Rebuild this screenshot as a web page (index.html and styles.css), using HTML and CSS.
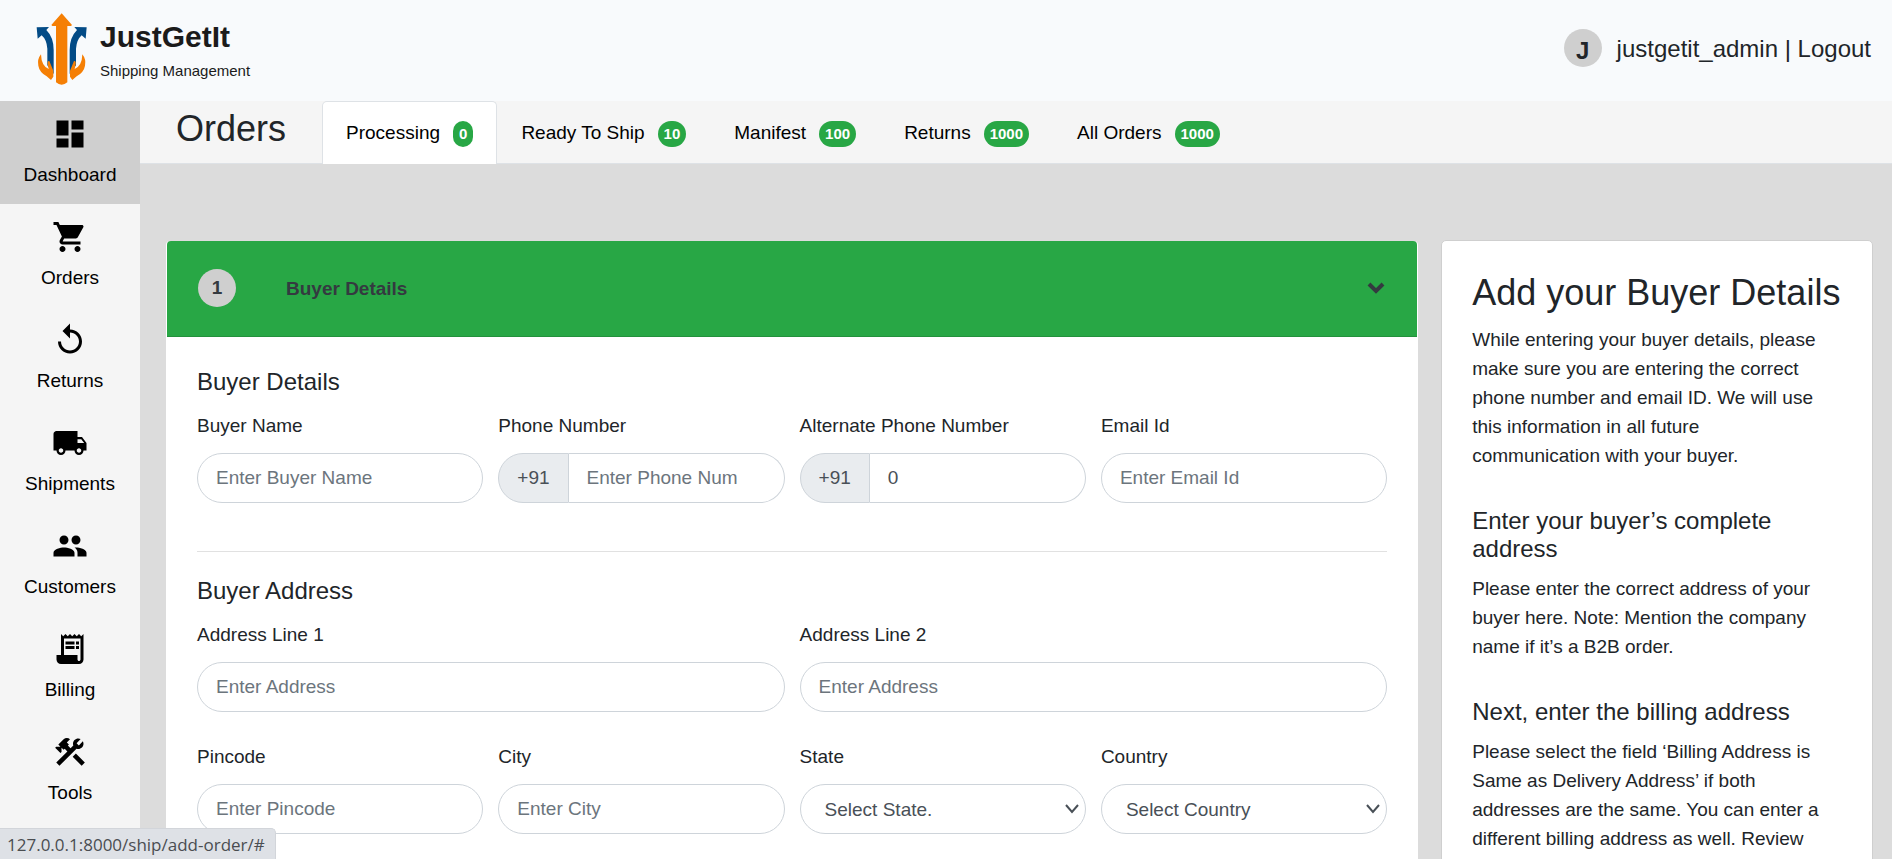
FILE: index.html
```html
<!DOCTYPE html>
<html lang="en">
<head>
<meta charset="utf-8">
<meta name="viewport" content="width=device-width, initial-scale=1">
<title>JustGetIt - Add Order</title>
<link rel="stylesheet" href="styles.css">
</head>
<body>
<header class="topbar">
  <a class="brand" href="#">
    <svg class="brand-logo" viewBox="108 39 156 216" aria-hidden="true">
      <g id="logo-side">
        <path fill="#034b86" d="M110 82 L147 81 L139 90 Q161 112 161 150 V222 L142 196 V146 Q140 119 125 106 L113 116 Z"/>
        <path fill="#f57f05" d="M123 163 Q111 178 115 197 Q118 216 140 229 L153 240 L160 230 V212 L148 183 Q142 181 143 192 L146 207 Q124 198 123 163 Z"/>
      </g>
      <use href="#logo-side" transform="translate(370 0) scale(-1 1)"/>
      <path fill="#f57f05" d="M185 40 L216 75 L213 78 H202 V247 Q194 254 185 254 Q176 254 168 247 V78 H157 L154 75 Z"/>
    </svg>
    <span class="brand-text">
      <strong class="brand-name">JustGetIt</strong>
      <span class="brand-sub">Shipping Management</span>
    </span>
  </a>
  <div class="user">
    <span class="avatar">J</span>
    <span>justgetit_admin | <a href="#">Logout</a></span>
  </div>
</header>

<div class="shell">
  <nav class="sidebar" aria-label="Main">
    <a class="side-item active" href="#">
      <svg viewBox="0 0 24 24" aria-hidden="true"><path d="M3 13h8V3H3v10zm0 8h8v-6H3v6zm10 0h8V11h-8v10zm0-18v6h8V3h-8z"/></svg>
      Dashboard
    </a>
    <a class="side-item" href="#">
      <svg viewBox="0 0 24 24" aria-hidden="true"><path d="M7 18c-1.1 0-1.99.9-1.99 2S5.9 22 7 22s2-.9 2-2-.9-2-2-2zM1 2v2h2l3.6 7.59-1.35 2.45c-.16.28-.25.61-.25.96 0 1.1.9 2 2 2h12v-2H7.42c-.14 0-.25-.11-.25-.25l.03-.12.9-1.63h7.45c.75 0 1.41-.41 1.75-1.03l3.58-6.49c.08-.14.12-.31.12-.48 0-.55-.45-1-1-1H5.21l-.94-2H1zm16 16c-1.1 0-1.99.9-1.99 2s.89 2 1.99 2 2-.9 2-2-.9-2-2-2z"/></svg>
      Orders
    </a>
    <a class="side-item" href="#">
      <svg viewBox="0 0 24 24" aria-hidden="true"><path d="M12 5V1L7 6l5 5V7c3.31 0 6 2.69 6 6s-2.69 6-6 6-6-2.69-6-6H4c0 4.42 3.58 8 8 8s8-3.58 8-8-3.58-8-8-8z"/></svg>
      Returns
    </a>
    <a class="side-item" href="#">
      <svg viewBox="0 0 24 24" aria-hidden="true"><path d="M20 8h-3V4H3c-1.1 0-2 .9-2 2v11h2c0 1.66 1.34 3 3 3s3-1.34 3-3h6c0 1.66 1.34 3 3 3s3-1.34 3-3h2v-5l-3-4zM6 18.500c-.83 0-1.500-.67-1.500-1.500s.67-1.500 1.500-1.500 1.500.67 1.500 1.500-.67 1.500-1.500 1.500zm13.500-9l1.960 2.500H17V9.500h2.500zm-1.500 9c-.83 0-1.500-.67-1.500-1.500s.67-1.500 1.500-1.500 1.500.67 1.500 1.500-.67 1.500-1.500 1.500z"/></svg>
      Shipments
    </a>
    <a class="side-item" href="#">
      <svg viewBox="0 0 24 24" aria-hidden="true"><path d="M16 11c1.660 0 2.990-1.340 2.990-3S17.660 5 16 5c-1.660 0-3 1.340-3 3s1.340 3 3 3zm-8 0c1.660 0 2.990-1.340 2.990-3S9.660 5 8 5C6.340 5 5 6.340 5 8s1.340 3 3 3zm0 2c-2.330 0-7 1.170-7 3.500V19h14v-2.500c0-2.330-4.670-3.500-7-3.500zm8 0c-.29 0-.62.02-.97.05 1.160.84 1.970 1.970 1.970 3.450V19h6v-2.500c0-2.330-4.670-3.500-7-3.500z"/></svg>
      Customers
    </a>
    <a class="side-item" href="#">
      <svg viewBox="0 0 24 24" aria-hidden="true"><path d="M19.500 3.500L18 2l-1.500 1.500L15 2l-1.500 1.500L12 2l-1.500 1.500L9 2 7.500 3.500 6 2v14H3v3c0 1.660 1.340 3 3 3h12c1.660 0 3-1.340 3-3V2l-1.500 1.500zM19 19c0 .55-.45 1-1 1s-1-.45-1-1v-3H8V5h11v14z"/><path d="M9 7h6v2H9zM16 7h2v2h-2zM9 10h6v2H9zM16 10h2v2h-2z"/></svg>
      Billing
    </a>
    <a class="side-item" href="#">
      <svg viewBox="0 0 24 24" aria-hidden="true"><path d="M13.783 15.172l2.121-2.121 5.996 5.996-2.121 2.121zM17.500 10c1.930 0 3.500-1.570 3.500-3.500 0-.58-.16-1.120-.41-1.600l-2.700 2.700-1.490-1.490 2.700-2.700c-.48-.25-1.020-.41-1.600-.41C15.570 3 14 4.570 14 6.500c0 .41.08.8.21 1.160l-1.850 1.850-1.780-1.780.71-.71-1.410-1.410L12 3.490c-1.170-1.170-3.070-1.170-4.240 0L4.220 7.030l1.410 1.410H2.810l-.71.71 3.540 3.540.71-.71V9.150l1.410 1.410.71-.71 1.780 1.780-7.410 7.410 2.120 2.120L16.340 9.790c.36.13.75.21 1.160.21z"/></svg>
      Tools
    </a>
  </nav>

  <div class="content">
    <div class="tabbar">
      <h1 class="page-title">Orders</h1>
      <nav class="tabs" aria-label="Order status">
        <a class="tab active" href="#">Processing <span class="badge">0</span></a>
        <a class="tab" href="#">Ready To Ship <span class="badge">10</span></a>
        <a class="tab" href="#">Manifest <span class="badge">100</span></a>
        <a class="tab" href="#">Returns <span class="badge">1000</span></a>
        <a class="tab" href="#">All Orders <span class="badge">1000</span></a>
      </nav>
    </div>

    <main class="main">
      <form class="card">
        <button class="card-header" type="button">
          <span class="step">1</span>
          <span class="card-title">Buyer Details</span>
          <svg class="chevron" viewBox="0 0 18 12" aria-hidden="true"><path d="M2 2l7 7 7-7"/></svg>
        </button>
        <div class="card-body">
          <h2 class="section-title">Buyer Details</h2>
          <div class="fields">
            <div class="field">
              <label for="buyer-name">Buyer Name</label>
              <input id="buyer-name" class="control" type="text" placeholder="Enter Buyer Name">
            </div>
            <div class="field">
              <label for="phone">Phone Number</label>
              <div class="group">
                <span class="addon">+91</span>
                <input id="phone" class="control" type="text" placeholder="Enter Phone Num">
              </div>
            </div>
            <div class="field">
              <label for="alt-phone">Alternate Phone Number</label>
              <div class="group">
                <span class="addon">+91</span>
                <input id="alt-phone" class="control" type="text" value="0">
              </div>
            </div>
            <div class="field">
              <label for="email">Email Id</label>
              <input id="email" class="control" type="email" placeholder="Enter Email Id">
            </div>
          </div>
          <hr class="rule">
          <h2 class="section-title">Buyer Address</h2>
          <div class="fields">
            <div class="field wide">
              <label for="address-1">Address Line 1</label>
              <input id="address-1" class="control" type="text" placeholder="Enter Address">
            </div>
            <div class="field wide">
              <label for="address-2">Address Line 2</label>
              <input id="address-2" class="control" type="text" placeholder="Enter Address">
            </div>
            <div class="field">
              <label for="pincode">Pincode</label>
              <input id="pincode" class="control" type="text" placeholder="Enter Pincode">
            </div>
            <div class="field">
              <label for="city">City</label>
              <input id="city" class="control" type="text" placeholder="Enter City">
            </div>
            <div class="field">
              <label for="state">State</label>
              <select id="state" class="control select"><option>Select State.</option></select>
            </div>
            <div class="field">
              <label for="country">Country</label>
              <select id="country" class="control select"><option>Select Country</option></select>
            </div>
          </div>
        </div>
      </form>

      <aside class="help">
        <h2 class="help-title">Add your Buyer Details</h2>
        <p>While entering your buyer details, please make sure you are entering the correct phone number and email ID. We will use this information in all future communication with your buyer.</p>
        <h3>Enter your buyer’s complete address</h3>
        <p>Please enter the correct address of your buyer here. Note: Mention the company name if it’s a B2B order.</p>
        <h3>Next, enter the billing address</h3>
        <p>Please select the field ‘Billing Address is Same as Delivery Address’ if both addresses are the same. You can enter a different billing address as well. Review</p>
      </aside>
    </main>
  </div>
</div>
<div class="status">127.0.0.1:8000/ship/add-order/#</div>
</body>
</html>
```
FILE: styles.css
```css
* {
  box-sizing: border-box;
}

body {
  display: flex;
  flex-direction: column;
  height: 100vh;
  margin: 0;
  overflow: hidden;
  background: #dcdcdc;
  color: #212529;
  font: 19px/29px "Liberation Sans", Arial, sans-serif;
}

h1, h2, h3, p {
  margin: 0;
  font-weight: 400;
}

a {
  color: inherit;
  text-decoration: none;
}

input, select, button {
  font: inherit;
}

/* Top bar */
.topbar {
  display: flex;
  flex: none;
  align-items: center;
  justify-content: space-between;
  padding: 13px 21px 16px 36px;
  background: #f8fafc;
}

.brand {
  display: flex;
  align-items: center;
  gap: 12px;
}

.brand-logo {
  width: 52px;
  height: 72px;
}

.brand-text {
  display: flex;
  flex-direction: column;
  gap: 4px;
  padding-top: 3px;
  color: #1b1b1b;
}

.brand-name {
  font-size: 30px;
  line-height: 36px;
}

.brand-sub {
  font-size: 15px;
  line-height: 24px;
}

.user {
  display: flex;
  align-items: center;
  gap: 15px;
  padding-bottom: 2px;
  font-size: 24px;
}

.avatar {
  width: 38px;
  height: 38px;
  padding-top: 7px;
  border-radius: 50%;
  background: #cfcfcf;
  font-weight: 700;
  text-align: center;
}

/* Sidebar */
.shell {
  display: flex;
  flex: 1;
  min-height: 0;
}

.sidebar {
  flex: none;
  width: 140px;
  background: #f5f5f5;
}

.side-item {
  display: flex;
  flex-direction: column;
  align-items: center;
  gap: 8px;
  padding: 15px 0;
  color: #000;
}

.side-item.active {
  background: #cfcfcf;
}

.side-item svg {
  width: 36px;
  height: 36px;
}

/* Tabs */
.content {
  display: flex;
  flex: 1;
  flex-direction: column;
  min-width: 0;
}

.tabbar {
  display: flex;
  flex: none;
  gap: 36px;
  padding-left: 36px;
  border-bottom: 1px solid #dee2e6;
  background: #f5f5f5;
}

.page-title {
  padding-top: 6px;
  font-size: 36px;
  line-height: 43px;
}

.tabs {
  display: flex;
  margin-bottom: -1px;
}

.tab {
  display: flex;
  align-items: baseline;
  gap: 13px;
  padding: 16px 23px 17px;
  border: 1px solid transparent;
  border-bottom: 0;
  border-radius: 5px 5px 0 0;
  color: #000;
}

.tab.active {
  border-color: #dee2e6;
  background: #fff;
}

.badge {
  padding: 0 6px;
  border-radius: 13px;
  background: #28a745;
  color: #fff;
  font-size: 15px;
  font-weight: 700;
  line-height: 26px;
}

/* Cards */
.main {
  display: grid;
  flex: 1;
  grid-template-columns: 29fr 10fr;
  gap: 23px;
  min-height: 0;
  padding: 76px 19px 0 26px;
  overflow: hidden;
}

.card {
  border: 1px solid #fff;
  border-top-color: #dcdcdc;
  border-radius: 5px;
  background: #fff;
}

.card-header {
  display: flex;
  align-items: center;
  width: 100%;
  padding: 28px 32px 29px 31px;
  border: 0;
  border-bottom: 1px solid #23913c;
  border-radius: 4px 4px 0 0;
  background: #28a745;
  color: #343a40;
  font-weight: 700;
  text-align: left;
}

.step {
  width: 38px;
  margin-right: 50px;
  border-radius: 19px;
  background: #cfcfcf;
  line-height: 38px;
  text-align: center;
}

.card-title {
  flex: 1;
}

.chevron {
  width: 18px;
  height: 12px;
  fill: none;
  stroke: #343a40;
  stroke-width: 4;
}

.card-body {
  padding: 30px 30px 60px;
}

.section-title {
  margin-bottom: 15px;
  font-size: 24px;
  line-height: 29px;
}

.fields {
  display: grid;
  grid-template-columns: repeat(4, 1fr);
  gap: 30px 15px;
}

.field {
  display: flex;
  flex-direction: column;
  gap: 13px;
  min-width: 0;
}

.wide {
  grid-column: span 2;
}

.control {
  width: 100%;
  min-width: 0;
  height: 50px;
  padding: 0 18px;
  border: 1px solid #ced4da;
  border-radius: 25px;
  background: #fff;
  color: #495057;
}

.control::placeholder {
  color: #6c757d;
  opacity: 1;
}

.select {
  padding: 0 24px;
  background: #fff url("data:image/svg+xml,%3Csvg xmlns='http://www.w3.org/2000/svg' width='14' height='10' fill='none' stroke='%23495057' stroke-width='2'%3E%3Cpath d='M1 1l6 7 6-7'/%3E%3C/svg%3E") no-repeat right 6px center;
  appearance: none;
}

.group {
  display: flex;
}

.group .control {
  border-left: 0;
  border-radius: 0 25px 25px 0;
}

.addon {
  padding: 0 18px;
  border: 1px solid #ced4da;
  border-radius: 25px 0 0 25px;
  background: #e9ecef;
  color: #495057;
  line-height: 48px;
}

.rule {
  width: 100%;
  margin: 48px 0 24px;
  border: 0;
  border-top: 1px solid #e1e1e1;
}

.help {
  padding: 30px;
  border: 1px solid #cfcfcf;
  border-radius: 5px;
  background: #fff;
}

.help-title {
  margin-bottom: 11px;
  font-size: 36px;
  line-height: 43px;
}

.help p {
  margin-bottom: 37px;
  padding-right: 12px;
}

.help h3 {
  margin-bottom: 11px;
  font-size: 24px;
  line-height: 28px;
}

/* Link preview shown over the bottom corner */
.status {
  position: absolute;
  bottom: 0;
  left: 0;
  padding: 2px 10px 0 7px;
  border: 1px solid #d2d5da;
  border-width: 1px 1px 0 0;
  border-radius: 0 5px 0 0;
  background: #dee1e6;
  color: #4a4d51;
  font: 17px/28px "Open Sans", "Noto Sans", sans-serif;
}
```
